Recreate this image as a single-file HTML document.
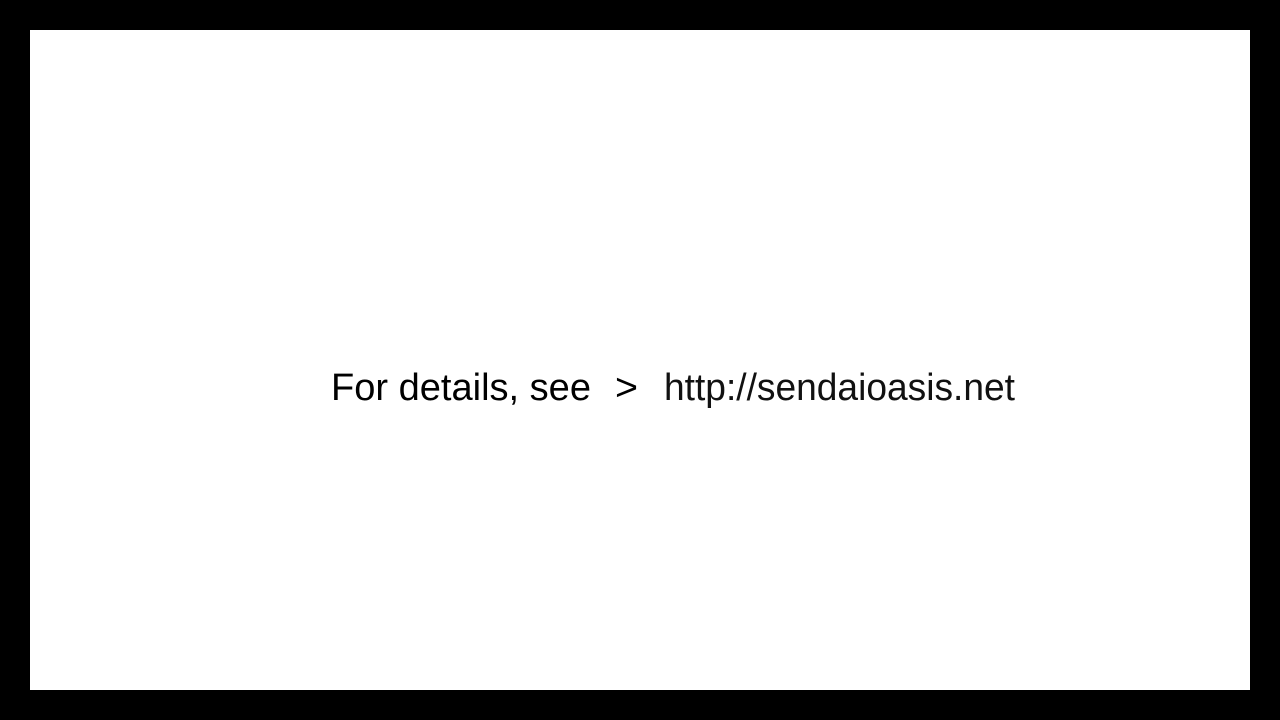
<!DOCTYPE html>
<html><head><meta charset="utf-8"><style>
html,body{margin:0;padding:0;background:#000;width:1280px;height:720px;overflow:hidden}
.w{position:absolute;left:30px;top:30px;width:1220px;height:660px;background:#fff}
svg{position:absolute;left:0;top:0}
</style></head><body>
<div class="w"></div>
<svg width="1280" height="720" xmlns="http://www.w3.org/2000/svg">
<g font-family="Liberation Sans, sans-serif" font-size="38" fill="#000">
<text x="331" y="400" textLength="260" lengthAdjust="spacingAndGlyphs">For details, see</text>
<text x="615" y="400" textLength="23" lengthAdjust="spacingAndGlyphs" font-weight="300">&gt;</text>
<text x="664" y="400" textLength="351" lengthAdjust="spacingAndGlyphs" fill="#111">http://sendaioasis.net</text>
</g>
</svg>
</body></html>
